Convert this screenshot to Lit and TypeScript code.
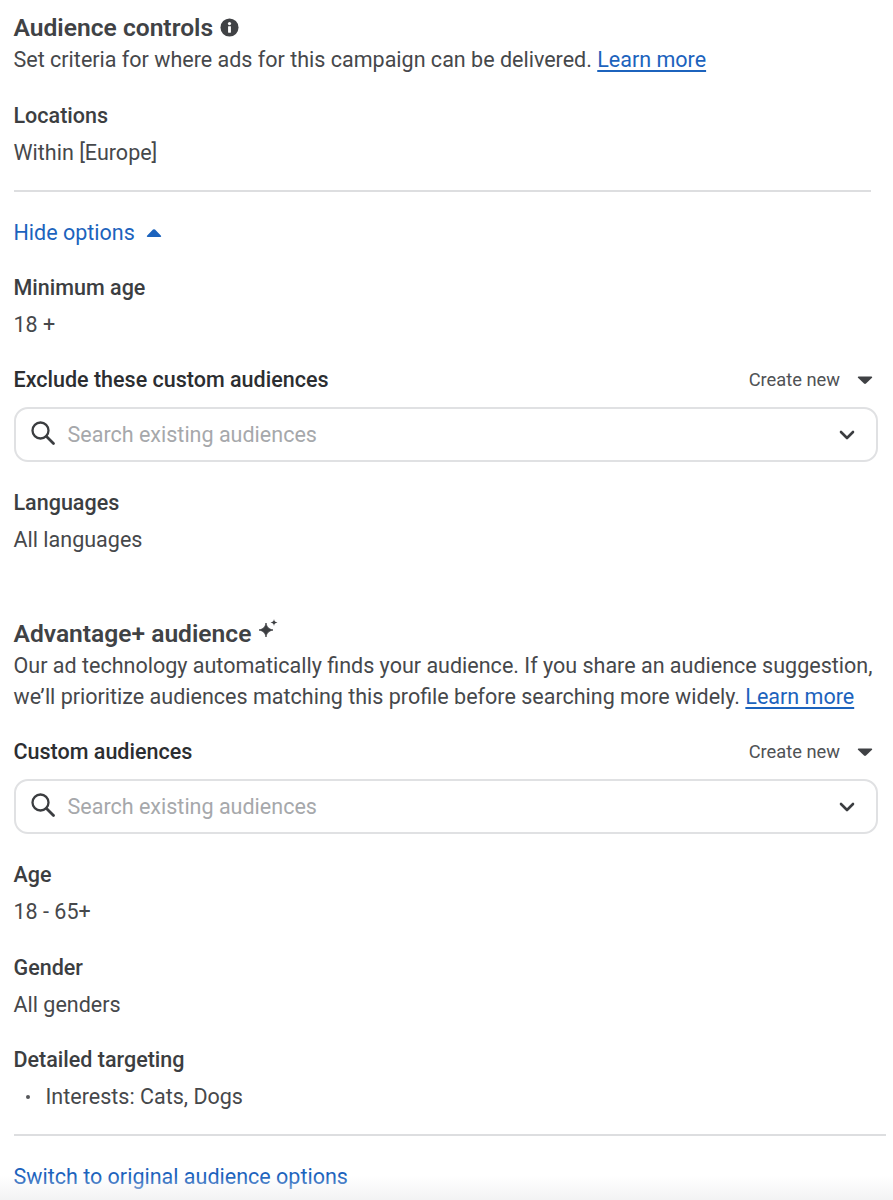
import { LitElement, html, css } from "lit";
import { customElement } from "lit/decorators.js";

const search = html`<svg class="search" viewBox="0 0 26 26" width="26" height="26" fill="none" stroke="#3b3d40"><circle cx="10.500" cy="10.500" r="8" stroke-width="2.300"/><path d="M16.500 16.500l7 7" stroke-width="2.800" stroke-linecap="round"/></svg>`;

const createNew = html`<div class="create"><span class="create-text">Create new</span><svg viewBox="0 0 16 10" width="16" height="10"><path d="M1.500 1.500h13a.8.8 0 0 1 .5 1.300L9 8.600a1.500 1.500 0 0 1-2 0L1 2.800a.8.8 0 0 1 .5-1.300z" fill="#3f4144"/></svg></div>`;

const searchBox = html`<div class="box">${search}<span class="ph">Search existing audiences</span><svg class="chev" viewBox="0 0 16 10" width="16" height="10" fill="none"><path d="M2 2l6 6 6-6" stroke="#3b3d40" stroke-width="2.600" stroke-linecap="round" stroke-linejoin="round"/></svg></div>`;

@customElement("app-root")
export class AppRoot extends LitElement {
  static styles = css`
    :host { display: block; width: 893px; height: 1200px; overflow: hidden; position: relative; background: #fff; font-family: Roboto, "Liberation Sans", sans-serif; color: #46484b; font-size: 21.52px; }
    .page { padding: 11px 7px 0 13.500px; }
    .line { line-height: 31px; height: 31px; white-space: nowrap; }
    .title { font-size: 24.6px; font-weight: 600; line-height: 34px; height: 33px; display: flex; align-items: center; gap: 7px; color: #404245; }
    .label { font-weight: 500; color: #3c3e41; line-height: 30px; height: 30px; }
    .value { line-height: 30px; height: 30px; margin-top: 7px; }
    .field { margin-top: 25px; }
    .first { margin-top: 26px; }
    .tight { margin-top: 25px; }
    .wide { margin-top: 26px; }
    a { color: #1c63bd; text-decoration: none; }
    a.u { text-decoration: underline; text-underline-offset: 3px; text-decoration-thickness: 1.500px; }
    hr { border: 0; height: 2px; background: #dddee0; margin: 0; }
    .hr1 { margin-top: 22px; width: 857.500px; }
    .hr2 { margin-top: 22px; width: 872.500px; }
    .hide { margin-top: 26px; display: flex; align-items: center; gap: 11px; line-height: 30px; height: 30px; }
    .row { display: flex; justify-content: space-between; align-items: center; height: 30px; width: 859.500px; }
    .dark { color: #2c2e31; }
    .create { display: flex; align-items: center; gap: 17px; font-size: 18.300px; color: #505255; }
    .create-text { margin-top: -2px; }
    .box { box-sizing: border-box; width: 864px; height: 55px; margin-top: 12px; border: 2px solid #e0e1e3; border-radius: 14px; display: flex; align-items: center; padding: 0 21px 0 14px; }
    .search { margin-top: -4px; flex: none; }
    .ph { margin-left: 12px; color: #a6a8ab; flex: 1; }
    .sect { margin-top: 62px; }
    .adv { display: flex; align-items: flex-start; gap: 7px; font-size: 24.6px; font-weight: 600; line-height: 34px; height: 33px; color: #404245; }
    .para { line-height: 31px; white-space: nowrap; margin-top: 0; }
    .bullet { margin-top: 7px; line-height: 30px; height: 30px; padding-left: 12px; display: flex; gap: 16px; align-items: center; }
    .dot { width: 4px; height: 4px; border-radius: 50%; background: #55575a; }
    .switch { margin-top: 26px; line-height: 30px; height: 30px; }
    .fade { position: absolute; left: 0; right: 0; bottom: 0; height: 24px; background: linear-gradient(to bottom, rgba(238,239,240,0), rgba(238,239,240,.75)); pointer-events: none; }
  `;

  render() {
    return html`
      <div class="page">
        <div class="title">Audience controls
          <svg viewBox="0 0 20 20" width="19" height="19"><circle cx="10" cy="10" r="9.500" fill="#404245"/><rect x="8.500" y="8.600" width="3" height="6.800" rx=".4" fill="#fff"/><circle cx="10" cy="5.900" r="1.700" fill="#fff"/></svg>
        </div>
        <div class="line">Set criteria for where ads for this campaign can be delivered. <a class="u" href="#">Learn more</a></div>

        <div class="label first">Locations</div>
        <div class="value">Within [Europe]</div>
        <hr class="hr1" />

        <a class="hide" href="#">Hide options
          <svg viewBox="0 0 16 10" width="16" height="10"><path d="M1.500 9h13a.8.8 0 0 0 .5-1.300L9 1.600a1.500 1.500 0 0 0-2 0L1 7.700A.8.8 0 0 0 1.500 9z" fill="#1c63bd"/></svg>
        </a>

        <div class="label field">Minimum age</div>
        <div class="value">18 +</div>

        <div class="row tight"><span class="label dark">Exclude these custom audiences</span>${createNew}</div>
        ${searchBox}

        <div class="label wide">Languages</div>
        <div class="value">All languages</div>

        <div class="sect">
          <div class="adv">Advantage+ audience
            <svg viewBox="0 0 20 22" width="20" height="22"><path d="M8 6c.8 4.200 2.600 6 7 7-4.400 1-6.200 2.800-7 7-.8-4.200-2.600-6-7-7 4.400-1 6.200-2.800 7-7z" fill="#3c3e41" stroke="#3c3e41" stroke-width=".8" stroke-linejoin="round"/><path d="M16 2c.3 2.200 1.200 3.100 3.500 3.500-2.300.4-3.200 1.300-3.500 3.500-.3-2.200-1.200-3.100-3.500-3.500 2.300-.4 3.200-1.300 3.500-3.500z" fill="#3c3e41"/></svg>
          </div>
          <div class="para">Our ad technology automatically finds your audience. If you share an audience suggestion,</div>
          <div class="para">we’ll prioritize audiences matching this profile before searching more widely. <a class="u" href="#">Learn more</a></div>
        </div>

        <div class="row tight"><span class="label dark">Custom audiences</span>${createNew}</div>
        ${searchBox}

        <div class="label wide">Age</div>
        <div class="value">18 - 65+</div>
        <div class="label wide">Gender</div>
        <div class="value">All genders</div>
        <div class="label field">Detailed targeting</div>
        <div class="bullet"><span class="dot"></span><span>Interests: Cats, Dogs</span></div>

        <hr class="hr2" />
        <div class="switch"><a href="#">Switch to original audience options</a></div>
      </div>
      <div class="fade"></div>
    `;
  }
}
